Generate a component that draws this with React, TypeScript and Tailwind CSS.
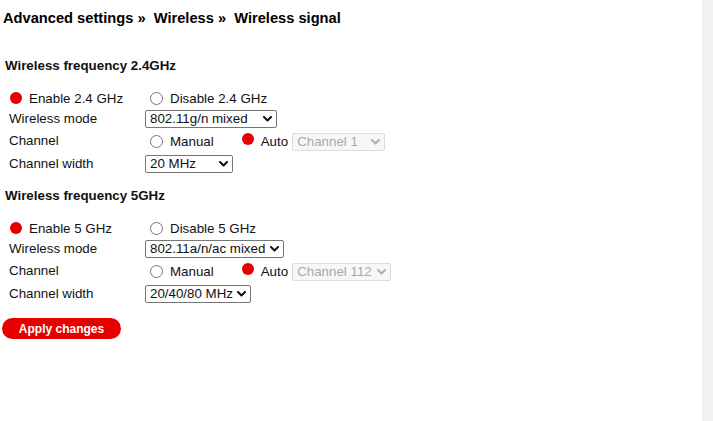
import React from "react";

const Dot = ({ className = "" }: { className?: string }) => (
  <span className={`inline-block h-[12px] w-[12px] shrink-0 rounded-full bg-[#e60000] ${className}`} />
);

const Ring = ({ className = "" }: { className?: string }) => (
  <span className={`inline-block h-[13px] w-[13px] shrink-0 rounded-full border border-[#767676] bg-white ${className}`} />
);

function Chevron({ color }: { color: string }) {
  return (
    <svg width="9" height="6" viewBox="0 0 9 6" className="ml-[3px] shrink-0">
      <path d="M1 1 L4.5 4.5 L8 1" fill="none" stroke={color} strokeWidth="2" strokeLinecap="round" strokeLinejoin="round" />
    </svg>
  );
}

function Select({ value, className, disabled }: { value: string; className: string; disabled?: boolean }) {
  return (
    <div
      className={`flex h-[18px] items-center justify-between rounded-[2px] border pl-[4px] pr-[4px] leading-[16px] ${
        disabled ? "border-[#dcdcdc] bg-[#f7f7f7] text-[#a9a9a9]" : "border-[#767676] bg-white text-[#111]"
      } ${className}`}
    >
      <span className="whitespace-nowrap">{value}</span>
      <Chevron color={disabled ? "#b0b0b0" : "#111"} />
    </div>
  );
}

type Band = {
  title: string;
  band: string;
  mode: string;
  modeW: string;
  channel: string;
  channelW: string;
  width: string;
  widthW: string;
};

const BANDS: Band[] = [
  {
    title: "Wireless frequency 2.4GHz",
    band: "2.4 GHz",
    mode: "802.11g/n mixed",
    modeW: "w-[132px]",
    channel: "Channel 1",
    channelW: "w-[93px]",
    width: "20 MHz",
    widthW: "w-[88px]",
  },
  {
    title: "Wireless frequency 5GHz",
    band: "5 GHz",
    mode: "802.11a/n/ac mixed",
    modeW: "w-[139px]",
    channel: "Channel 112",
    channelW: "w-[99px]",
    width: "20/40/80 MHz",
    widthW: "w-[106px]",
  },
];

function BandSection({ b }: { b: Band }) {
  return (
    <section>
      <h2 className="pl-[5px] text-[13.33px] font-bold leading-[16px]">{b.title}</h2>

      <div className="mt-[15px]">
        {/* enable / disable */}
        <div className="flex h-[19px] items-center">
          <div className="flex w-[145px] items-center pl-[10px]">
            <Dot className="mb-[2px]" />
            <span className="ml-[7px]">Enable {b.band}</span>
          </div>
          <div className="flex items-center pl-[5px]">
            <Ring />
            <span className="ml-[7px]">Disable {b.band}</span>
          </div>
        </div>

        {/* wireless mode */}
        <div className="flex h-[21px] items-center">
          <div className="w-[145px] pl-[9px]">Wireless mode</div>
          <Select value={b.mode} className={b.modeW} />
        </div>

        {/* channel */}
        <div className="flex h-[25px] items-center">
          <div className="mb-[1px] w-[145px] pl-[9px]">Channel</div>
          <div className="flex items-center pl-[5px]">
            <Ring />
            <span className="ml-[7px] mt-[1px]">Manual</span>
            <Dot className="mb-[6px] ml-[28px]" />
            <span className="ml-[7px] mt-[1px]">Auto</span>
            <Select value={b.channel} className={`ml-[4px] ${b.channelW}`} disabled />
          </div>
        </div>

        {/* channel width */}
        <div className="flex h-[19px] items-center">
          <div className="w-[145px] pl-[9px]">Channel width</div>
          <Select value={b.width} className={b.widthW} />
        </div>
      </div>
    </section>
  );
}

export default function App() {
  return (
    <div className="flex h-[421px] w-[713px] overflow-hidden bg-white font-['Liberation_Sans',Arial,sans-serif] text-[13.33px] leading-[16px] text-[#111]">
      <main className="flex-1">
        <h1 className="pl-[3px] pt-[10px] text-[14.67px] font-bold leading-[17px] text-black">
          Advanced settings »&nbsp; Wireless »&nbsp; Wireless signal
        </h1>

        <div className="mt-[31px] flex flex-col gap-[15px]">
          {BANDS.map((b) => (
            <BandSection key={b.title} b={b} />
          ))}
        </div>

        <button className="ml-[2px] mt-[15px] flex h-[21px] w-[119px] items-center justify-center rounded-full bg-[#e60000] text-[12px] font-bold text-white">
          Apply changes
        </button>
      </main>

      {/* scrollbar track */}
      <div className="w-[11px] bg-[#f1f1f1]" />
    </div>
  );
}
